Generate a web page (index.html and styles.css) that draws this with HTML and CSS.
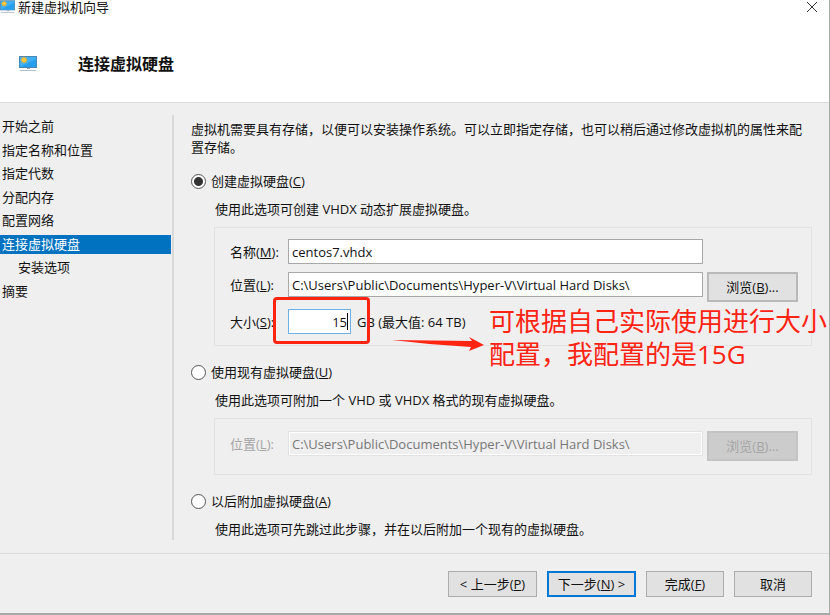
FILE: index.html
```
<!DOCTYPE html>
<html lang="zh-CN">
<head>
    <meta charset="UTF-8">
    <title>新建虚拟机向导</title>
    <link rel="stylesheet" href="styles.css">
</head>
<body>
<svg width="0" height="0" class="defs">
    <symbol id="monitor" viewBox="0 0 18 16">
        <rect x="0.5" y="0.5" width="17" height="11" fill="#3fb0f5" stroke="#4b87b5"/>
        <path d="M1 11L17 3V11Z" fill="#26a0ee"/>
        <path d="M8 12h3v1H8z" fill="#8fa3b3"/>
        <path d="M1 14h16v1H1z" fill="#b4bcc6"/>
        <path d="M5 0l1 2 2-1-1 2 2 1-2 1 1 2-2-1-1 2-1-2-2 1 1-2-2-1 2-1-1-2 2 1z" fill="#f3b52c"/>
        <circle cx="5" cy="4" r="2" fill="#ffc93c"/>
    </symbol>
</svg>
<div class="window">
    <div class="header">
        <div class="title-bar">
            <svg class="title-icon"><use href="#monitor"/></svg>
            <span>新建虚拟机向导</span>
            <button class="close" type="button" aria-label="关闭">
                <svg width="12" height="12" viewBox="0 0 12 12"><path d="M1 1L11 11M11 1L1 11" stroke="#333" fill="none"/></svg>
            </button>
        </div>
        <div class="heading">
            <svg class="head-icon"><use href="#monitor"/></svg>
            <h1>连接虚拟硬盘</h1>
        </div>
    </div>
    <div class="content">
        <ul class="steps">
            <li>开始之前</li>
            <li>指定名称和位置</li>
            <li>指定代数</li>
            <li>分配内存</li>
            <li>配置网络</li>
            <li class="active">连接虚拟硬盘</li>
            <li class="sub">安装选项</li>
            <li>摘要</li>
        </ul>
        <form class="main" id="wizard">
            <p class="intro">虚拟机需要具有存储，以便可以安装操作系统。可以立即指定存储，也可以稍后通过修改虚拟机的属性来配置存储。</p>
            <div class="option">
                <input type="radio" name="disk" id="create" checked>
                <label for="create">创建虚拟硬盘(<u>C</u>)</label>
            </div>
            <p class="desc">使用此选项可创建 VHDX 动态扩展虚拟硬盘。</p>
            <div class="box">
                <label for="name">名称(<u>M</u>):</label>
                <input class="text" type="text" id="name" value="centos7.vhdx">
                <label class="row-start" for="path">位置(<u>L</u>):</label>
                <input class="text" type="text" id="path" value="C:\Users\Public\Documents\Hyper-V\Virtual Hard Disks\">
                <button class="browse" type="button">浏览(<u>B</u>)...</button>
                <label class="row-start" for="size">大小(<u>S</u>):</label>
                <div class="size-row">
                    <span class="size-field">
                        <input class="text size" type="text" id="size" value="15">
                        <i class="caret"></i>
                        <i class="mark"></i>
                    </span>
                    <span>GB (最大值: 64 TB)</span>
                </div>
                <div class="note">
                    <svg class="arrow" viewBox="0 0 92 16"><path d="M0 4L80 5L77 1L92 9L77 15L79 11Q40 9 0 4Z" fill="#ff2312"/></svg>
                    <p>可根据自己实际使用进行大小<br>配置，我配置的是15G</p>
                </div>
            </div>
            <div class="option">
                <input type="radio" name="disk" id="exist">
                <label for="exist">使用现有虚拟硬盘(<u>U</u>)</label>
            </div>
            <p class="desc">使用此选项可附加一个 VHD 或 VHDX 格式的现有虚拟硬盘。</p>
            <div class="box disabled">
                <label for="path2">位置(<u>L</u>):</label>
                <input class="text" type="text" id="path2" value="C:\Users\Public\Documents\Hyper-V\Virtual Hard Disks\" disabled>
                <button class="browse" type="button" disabled>浏览(<u>B</u>)...</button>
            </div>
            <div class="option">
                <input type="radio" name="disk" id="later">
                <label for="later">以后附加虚拟硬盘(<u>A</u>)</label>
            </div>
            <p class="desc">使用此选项可先跳过此步骤，并在以后附加一个现有的虚拟硬盘。</p>
        </form>
    </div>
    <div class="footer">
        <button class="wide" type="button">&lt; 上一步(<u>P</u>)</button>
        <button class="wide default" type="submit" form="wizard">下一步(<u>N</u>) &gt;</button>
        <button type="button">完成(<u>F</u>)</button>
        <button type="button">取消</button>
    </div>
</div>
</body>
</html>
```
FILE: styles.css
```
*{
    padding: 0;
    margin: 0;
    box-sizing: border-box;
}
ul{
    list-style-type: none;
}
body{
    background-color: #a9a9a9;
    color: #111111;
    font: 13px/18px "Open Sans", "Noto Sans CJK SC", sans-serif;
}
input, button{
    font: inherit;
    color: inherit;
}
.defs{
    position: absolute;
}
.window{
    margin: 0 1px 2px 0;
    background-color: #efefef;
}
.header{
    height: 103px;
    background-color: #ffffff;
    border-bottom: 1px solid #dcdcdc;
}
.title-bar{
    display: flex;
    height: 14px;
    gap: 3px;
    align-items: center;
    line-height: 14px;
}
.title-icon{
    width: 15px;
    height: 14px;
}
.close{
    display: flex;
    height: 12px;
    margin: 0 11px 0 auto;
    border: none;
    background: none;
}
.heading{
    display: flex;
    align-items: center;
    padding: 38px 0 0 19px;
}
.head-icon{
    width: 18px;
    height: 16px;
}
h1{
    margin-left: 41px;
    font-size: 16px;
    line-height: 24px;
}
.content{
    display: flex;
    padding: 12px 17px 13px 0;
    border-bottom: 1px solid #dcdcdc;
}
.steps{
    display: flex;
    flex-direction: column;
    justify-content: space-between;
    width: 171px;
    height: 184px;
    margin-top: 2px;
}
.steps li{
    height: 19px;
    padding-left: 2px;
}
.steps .active{
    background-color: #0072c0;
    color: #ffffff;
}
.steps .sub{
    padding-left: 18px;
}
.main{
    flex: 1;
    min-width: 0;
    margin-left: 1px;
    padding: 5px 0 2px 17px;
    border-left: 2px solid #d9d9d9;
}
.intro{
    margin-bottom: 14px;
}
.option{
    display: flex;
    align-items: center;
    height: 22px;
    gap: 5px;
}
.option input{
    appearance: none;
    width: 15px;
    height: 15px;
    border: 1px solid #555555;
    border-radius: 50%;
    background-color: #ffffff;
}
.option input:checked{
    background: radial-gradient(#333333 0 4px, #ffffff 5px);
}
.desc{
    margin: 8px 0 9px 24px;
}
.desc:last-child{
    margin-bottom: 0;
}
.box{
    position: relative;
    display: grid;
    grid-template-columns: 54px 1fr 91px;
    gap: 7px 4px;
    align-items: start;
    margin: 0 0 15px 23px;
    padding: 11px 13px 10px 15px;
    border: 1px solid #e2e2e2;
}
.box label{
    line-height: 26px;
}
.row-start{
    grid-column: 1;
}
.text{
    width: 100%;
    height: 25px;
    padding: 0 3px;
    border: 1px solid #a8a8a8;
    background-color: #ffffff;
}
button{
    height: 26px;
    border: 1px solid #adadad;
    background-color: #e1e1e1;
}
.browse{
    height: 30px;
    border-width: 2px;
    border-color: #b9b9b9;
}
.size-row{
    display: flex;
    align-items: center;
    gap: 6px;
}
.size-field{
    position: relative;
    width: 63px;
    height: 25px;
}
.size{
    border-color: #6db0e8;
    text-align: right;
}
.caret{
    position: absolute;
    right: 3px;
    top: 4px;
    width: 1px;
    height: 17px;
    background-color: #000000;
}
/* red frame round the size field */
.mark{
    position: absolute;
    left: -15px;
    top: -12px;
    width: 97px;
    height: 47px;
    border: 3px solid #ff2312;
    border-radius: 4px;
}
.note{
    position: absolute;
    left: 177px;
    top: 77px;
    display: flex;
    gap: 5px;
    color: #ff2312;
    font-size: 26px;
    line-height: 33px;
    white-space: nowrap;
}
.arrow{
    width: 92px;
    height: 16px;
    margin-top: 31px;
}
.disabled{
    padding: 12px 13px 13px 15px;
    color: #a5a5a5;
}
.disabled .text{
    padding: 0 2px;
    border: 2px solid #ffffff;
    outline: 1px solid #e2e2e2;
    outline-offset: -1px;
    background-color: #efefef;
    color: #777777;
}
.disabled .browse{
    background-color: #cccccc;
    border-color: #c4c4c4;
}
.footer{
    display: flex;
    justify-content: flex-end;
    gap: 10px;
    padding: 17px 17px 16px;
}
.footer button{
    width: 78px;
}
.footer .wide{
    width: 89px;
}
.footer .default{
    border: 2px solid #0078d7;
}
```
